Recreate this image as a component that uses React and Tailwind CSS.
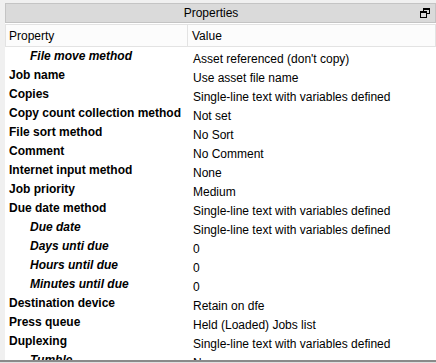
const rows = [
  { name: 'File move method', value: "Asset referenced (don't copy)", sub: true },
  { name: 'Job name', value: 'Use asset file name' },
  { name: 'Copies', value: 'Single-line text with variables defined' },
  { name: 'Copy count collection method', value: 'Not set' },
  { name: 'File sort method', value: 'No Sort' },
  { name: 'Comment', value: 'No Comment' },
  { name: 'Internet input method', value: 'None' },
  { name: 'Job priority', value: 'Medium' },
  { name: 'Due date method', value: 'Single-line text with variables defined' },
  { name: 'Due date', value: 'Single-line text with variables defined', sub: true },
  { name: 'Days unti due', value: '0', sub: true },
  { name: 'Hours until due', value: '0', sub: true },
  { name: 'Minutes until due', value: '0', sub: true },
  { name: 'Destination device', value: 'Retain on dfe' },
  { name: 'Press queue', value: 'Held (Loaded) Jobs list' },
  { name: 'Duplexing', value: 'Single-line text with variables defined' },
  { name: 'Tumble', value: 'No', sub: true },
];

function RestoreIcon() {
  return (
    <svg width="10" height="10" viewBox="0 0 10 10" className="block">
      <rect x="3.5" y="0.5" width="6" height="5" fill="none" stroke="#000" />
      <rect x="3" y="0" width="7" height="2" fill="#000" />
      <rect x="0.5" y="3.5" width="6" height="6" fill="#dadada" stroke="#000" />
      <rect x="0" y="3" width="7" height="2" fill="#000" />
    </svg>
  );
}

export default function App() {
  return (
    <div
      className="w-[436px] h-[363px] overflow-hidden bg-[#f0f0f0] flex flex-col text-[12px] text-black"
      style={{ fontFamily: '"Liberation Sans", Arial, sans-serif' }}
    >
      {/* title bar */}
      <div className="mt-[3px] ml-[5px] h-[20px] shrink-0 bg-[#dadada] border border-[#c4c4c4] flex items-center">
        <div className="flex-1 text-center pl-[1px]">Properties</div>
        <div className="w-[20px] flex justify-center">
          <RestoreIcon />
        </div>
      </div>

      <div className="ml-[5px] flex-1 bg-white flex flex-col overflow-hidden">
        {/* header */}
        <div className="h-[23px] mt-[1px] shrink-0 flex">
          <div className="w-[183px] bg-[#fcfcfc] border border-[#e3e3e3] flex items-center pl-[3px]">Property</div>
          <div className="flex-1 bg-[#fcfcfc] border border-l-0 border-[#e3e3e3] flex items-center pl-[4px]">Value</div>
        </div>

        <div className="flex-1 overflow-hidden">
          {rows.map((r) => (
            <div key={r.name} className="h-[19px] flex">
              <div
                className={`w-[183px] font-bold whitespace-nowrap ${r.sub ? 'pl-[25px] italic' : 'pl-[4px]'}`}
              >
                {r.name}
              </div>
              <div className="flex-1 pl-[5px] pt-[3px] whitespace-nowrap">{r.value}</div>
            </div>
          ))}
        </div>
      </div>

      <div className="h-[2px] shrink-0 bg-[#8a8a8a]" />
      <div className="h-[1px] shrink-0 bg-[#e0e0e0]" />
    </div>
  );
}
